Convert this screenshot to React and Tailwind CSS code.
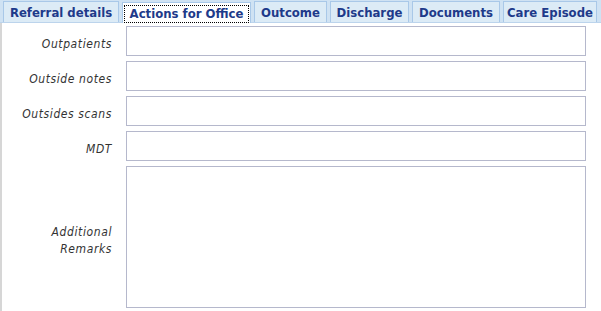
const tabs = [
  { label: "Referral details", w: "w-[116px]" },
  { label: "Actions for Office", w: "w-[129px]", active: true },
  { label: "Outcome", w: "w-[73px]" },
  { label: "Discharge", w: "w-[79px]" },
  { label: "Documents", w: "w-[88px]" },
  { label: "Care Episode", w: "w-[94px]" },
];

const fields = ["Outpatients", "Outside notes", "Outsides scans", "MDT"];

const font = { fontFamily: '"DejaVu Sans Condensed", "DejaVu Sans", sans-serif' };

const App = () => {
  return (
    <div className="w-[601px] h-[311px] overflow-hidden bg-white" style={font}>
      {/* tab strip */}
      <div className="flex items-end gap-[3px] h-[23px] pl-[3px] bg-[#cfe2f3] border-b border-[#bcd4ec]">
        {tabs.map((t) =>
          t.active ? (
            <div
              key={t.label}
              className={`${t.w} h-[21px] -mb-px flex items-center justify-center bg-white border border-[#a9c8e8] border-b-0`}
            >
              <span className="flex items-center justify-center w-[125px] h-[18px] mt-[1px] border border-dotted border-black text-[13px] font-bold text-[#1e3a8a]">
                {t.label}
              </span>
            </div>
          ) : (
            <div
              key={t.label}
              className={`${t.w} h-[21px] pt-px flex items-center justify-center bg-[#dcebf6] border border-[#a9c8e8] border-b-0 text-[13px] font-bold text-[#1e3a8a]`}
            >
              {t.label}
            </div>
          )
        )}
      </div>

      {/* form */}
      <div className="h-[288px] border-l-2 border-[#d6d6d6] pt-[3px]">
        <div className="grid grid-cols-[110px_460px] gap-x-[14px] gap-y-[5px]">
          {fields.map((f) => (
            <div key={f} className="contents">
              <label className="pt-[9px] text-right text-[12px] italic tracking-[0.6px] text-[#333]">{f}</label>
              <input className="h-[30px] border border-[#b5b8cc] bg-white outline-none" />
            </div>
          ))}
          <label className="self-center pt-[8px] text-right text-[12px] italic tracking-[0.6px] text-[#333] leading-[17px]">
            Additional
            <br />
            Remarks
          </label>
          <textarea className="h-[142px] border border-[#b5b8cc] bg-white outline-none resize-none" />
        </div>
      </div>
    </div>
  );
};

export default App;
